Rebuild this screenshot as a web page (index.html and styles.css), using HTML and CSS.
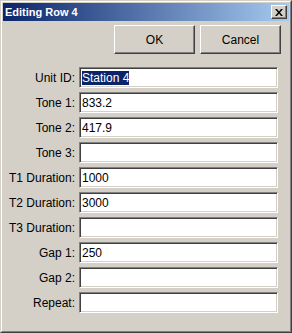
FILE: index.html
```html
<!DOCTYPE html>
<html lang="en">
<head>
  <meta charset="UTF-8" />
  <title>Editing Row 4</title>
  <link rel="stylesheet" href="styles.css">
</head>
<body>

<div class="window">
  <div class="frame">
    <div class="titlebar">
      <span class="title">Editing Row 4</span>
      <span class="close-btn">
        <svg width="8" height="7" viewBox="0 0 8 7">
          <path d="M0 0h2l2 2.5 2-2.5h2l-3 3.5 3 3.5h-2l-2-2.5-2 2.5h-2l3-3.5z" fill="black"/>
        </svg>
      </span>
    </div>

    <div class="button-row">
      <button class="btn">OK</button>
      <button class="btn">Cancel</button>
    </div>

    <!-- Fields -->
    <div class="form">
      <label>Unit ID:</label>
      <div class="field"><span class="selected">Station 4</span></div>
      <label>Tone 1:</label>
      <div class="field">833.2</div>
      <label>Tone 2:</label>
      <div class="field">417.9</div>
      <label>Tone 3:</label>
      <div class="field"></div>
      <label>T1 Duration:</label>
      <div class="field">1000</div>
      <label>T2 Duration:</label>
      <div class="field">3000</div>
      <label>T3 Duration:</label>
      <div class="field"></div>
      <label>Gap 1:</label>
      <div class="field">250</div>
      <label>Gap 2:</label>
      <div class="field"></div>
      <label>Repeat:</label>
      <div class="field"></div>
    </div>
  </div>
</div>

</body>
</html>
```

FILE: styles.css
```css
body {
  margin: 0;
  font-family: 'Liberation Sans', Arial, sans-serif;
  font-size: 12px;
  background: #d4d0c8;
}

.window {
  width: 292px;
  height: 333px;
  box-sizing: border-box;
  border: 1px solid;
  border-color: #d4d0c8 #404040 #404040 #d4d0c8;
  background: #d4d0c8;
}

.frame {
  height: 100%;
  box-sizing: border-box;
  border: 1px solid;
  border-color: #ffffff #808080 #808080 #ffffff;
  padding: 1px;
}

.titlebar {
  height: 18px;
  display: flex;
  align-items: center;
  justify-content: space-between;
  padding: 0 2px 0 2px;
  background: linear-gradient(to right, #0a246a, #a6caf0);
}

.title {
  color: white;
  font-weight: bold;
  font-size: 11px;
}

.close-btn {
  width: 16px;
  height: 14px;
  box-sizing: border-box;
  display: flex;
  align-items: center;
  justify-content: center;
  background: #d4d0c8;
  border: 1px solid;
  border-color: #ffffff #404040 #404040 #ffffff;
  box-shadow: inset -1px -1px #808080;
}

.button-row {
  display: flex;
  justify-content: flex-end;
  gap: 5px;
  padding: 4px 8px 0 0;
}

.btn {
  width: 81px;
  height: 29px;
  box-sizing: border-box;
  background: #d4d0c8;
  border: 1px solid;
  border-color: #ffffff #404040 #404040 #ffffff;
  box-shadow: inset -1px -1px #808080;
  font-family: 'Liberation Sans', Arial, sans-serif;
  font-size: 12px;
  color: black;
  padding: 0;
}

.form {
  display: grid;
  grid-template-columns: 72px 199px;
  column-gap: 4px;
  row-gap: 4px;
  margin-top: 13px;
}

.form label {
  text-align: right;
  align-self: center;
}

.field {
  height: 21px;
  box-sizing: border-box;
  background: white;
  border: 1px solid;
  border-color: #808080 #ffffff #ffffff #808080;
  box-shadow: inset 1px 1px #404040, inset -1px -1px #d4d0c8;
  padding: 3px 0 0 2px;
  line-height: 14px;
}

.selected {
  background: #0a246a;
  color: white;
}
```
